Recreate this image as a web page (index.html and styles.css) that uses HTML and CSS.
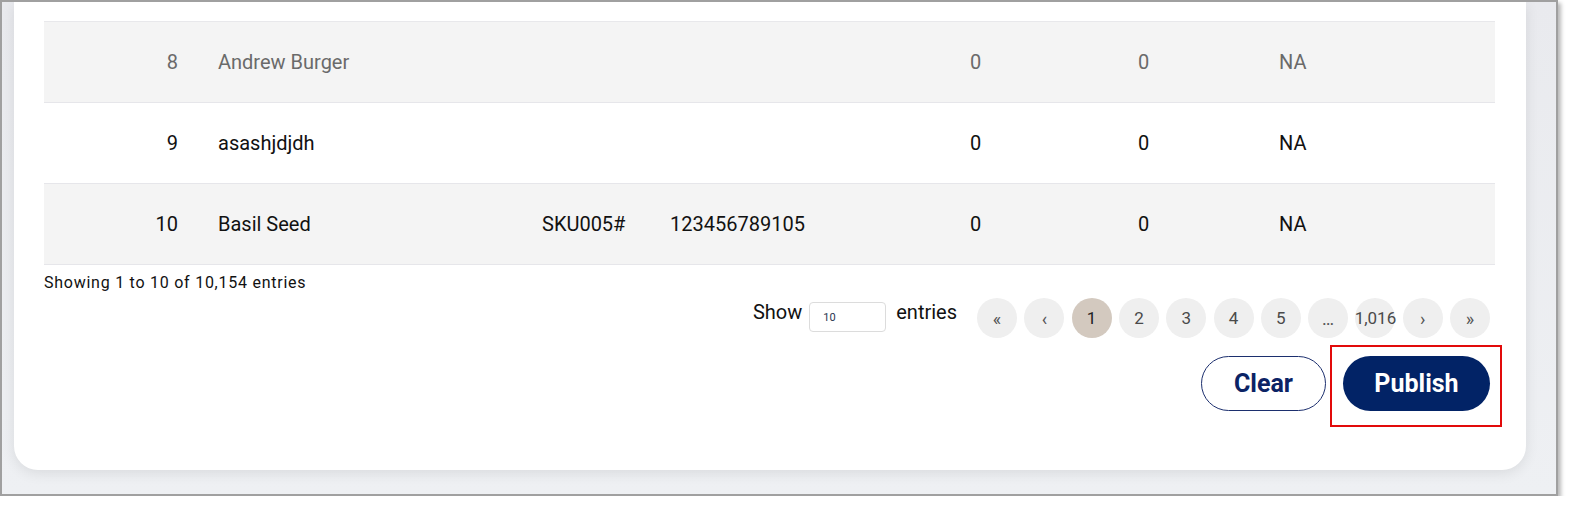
FILE: index.html
```html
<!DOCTYPE html>
<html lang="en">
<head>
<meta charset="utf-8">
<title>Products</title>
<link rel="stylesheet" href="styles.css">
</head>
<body>
<div class="frame">
  <div class="card">
    <table class="grid">
      <colgroup>
        <col class="c-num"><col class="c-name"><col class="c-sku"><col class="c-code"><col class="c-a"><col class="c-b"><col class="c-na">
      </colgroup>
      <tbody>
        <tr class="row-alt row-muted">
          <td class="num">8</td><td>Andrew Burger</td><td></td><td></td><td>0</td><td>0</td><td>NA</td>
        </tr>
        <tr>
          <td class="num">9</td><td>asashjdjdh</td><td></td><td></td><td>0</td><td>0</td><td>NA</td>
        </tr>
        <tr class="row-alt">
          <td class="num">10</td><td>Basil Seed</td><td>SKU005#</td><td>123456789105</td><td>0</td><td>0</td><td>NA</td>
        </tr>
      </tbody>
    </table>
    <div class="info">Showing 1 to 10 of 10,154 entries</div>
    <div class="pager-row">
      <div class="length">
        <span class="len-label">Show</span>
        <input class="len-input" type="text" value="10">
        <span class="len-label len-after">entries</span>
      </div>
      <ul class="pages">
        <li class="page glyph">&laquo;</li>
        <li class="page glyph">&lsaquo;</li>
        <li class="page active">1</li>
        <li class="page">2</li>
        <li class="page">3</li>
        <li class="page">4</li>
        <li class="page">5</li>
        <li class="page glyph">&hellip;</li>
        <li class="page">1,016</li>
        <li class="page glyph">&rsaquo;</li>
        <li class="page glyph">&raquo;</li>
      </ul>
    </div>
    <div class="actions">
      <button class="btn btn-outline" type="button">Clear</button>
      <div class="highlight">
        <button class="btn btn-primary" type="button">Publish</button>
        <span class="annot"></span>
      </div>
    </div>
  </div>
</div>
</body>
</html>
```
FILE: styles.css
```css
* { box-sizing: border-box; }
html, body { margin: 0; padding: 0; background: #ffffff; }
body { font-family: Roboto, "Liberation Sans", Arial, sans-serif; color: #111; }

.frame {
  width: 1558px;
  height: 496px;
  border: 2px solid #a0a0a0;
  background: linear-gradient(180deg, #e9eaee 0%, #eef0f3 100%);
  box-shadow: 3px 3px 4px rgba(0, 0, 0, 0.28);
  padding: 0 30px 0 12px;
  overflow: hidden;
}

.card {
  width: 1512px;
  height: 468px;
  background: #ffffff;
  border-radius: 0 0 24px 24px;
  box-shadow: 0 3px 14px rgba(0, 0, 0, 0.09);
  padding: 19px 31px 0 30px;
}

.grid {
  width: 1451px;
  border-collapse: collapse;
  table-layout: fixed;
  font-size: 20px;
  border-top: 1px solid #e8e8eb;
}
.c-num { width: 154px; }
.c-name { width: 324px; }
.c-sku { width: 128px; }
.c-code { width: 300px; }
.c-a { width: 168px; }
.c-b { width: 141px; }
.c-na { width: 236px; }

.grid tr { height: 81px; }
.grid td {
  padding: 0 20px;
  border-bottom: 1px solid #e6e6ea;
  vertical-align: middle;
  white-space: nowrap;
  color: #111;
  line-height: 24px;
}
.grid td.num { text-align: right; }
.row-alt td { background: #f4f4f4; }
.row-muted td { color: #6a6a6a; }

.info {
  margin-top: 9px;
  font-size: 16px;
  line-height: 18px;
  letter-spacing: 0.75px;
  color: #111;
}

.pager-row {
  margin-top: 6px;
  margin-right: 5px;
  display: flex;
  justify-content: flex-end;
  align-items: flex-start;
}

.length {
  display: flex;
  align-items: flex-start;
  margin-top: 4px;
  margin-right: 20px;
}
.len-label {
  font-size: 20px;
  line-height: 21px;
  color: #111;
}
.len-input {
  width: 77px;
  height: 30px;
  margin: 0 10px 0 7px;
  border: 1px solid #dcdcdc;
  border-radius: 4px;
  padding: 0 0 0 13px;
  font-family: Roboto, "Liberation Sans", Arial, sans-serif;
  font-size: 11px;
  color: #2b3650;
  background: #fff;
  outline: none;
}

.pages {
  display: flex;
  gap: 7.3px;
  margin: 0;
  padding: 0;
  list-style: none;
}
.page {
  width: 40px;
  height: 40px;
  border-radius: 50%;
  background: #efefef;
  display: flex;
  align-items: center;
  justify-content: center;
  font-size: 17px;
  color: #4a4a4a;
  white-space: nowrap;
}
.page.glyph { font-size: 18px; color: #555; }
.page.active { background: #d3c9bf; color: #222; }

.actions {
  margin-top: 18px;
  margin-right: 5px;
  display: flex;
  justify-content: flex-end;
  gap: 17px;
}
.btn {
  height: 55px;
  border-radius: 28px;
  font-family: Roboto, "Liberation Sans", Arial, sans-serif;
  font-weight: 700;
  font-size: 25px;
  padding: 0;
  cursor: pointer;
}
.btn-outline {
  width: 125px;
  background: #ffffff;
  border: 1px solid #1c2f6e;
  color: #0b2365;
}
.btn-primary {
  width: 147px;
  background: #022366;
  border: none;
  color: #ffffff;
}
.highlight { position: relative; }
.annot {
  position: absolute;
  left: -13px;
  top: -11px;
  width: 172px;
  height: 82px;
  border: 2px solid #e20a0a;
  pointer-events: none;
}
```
